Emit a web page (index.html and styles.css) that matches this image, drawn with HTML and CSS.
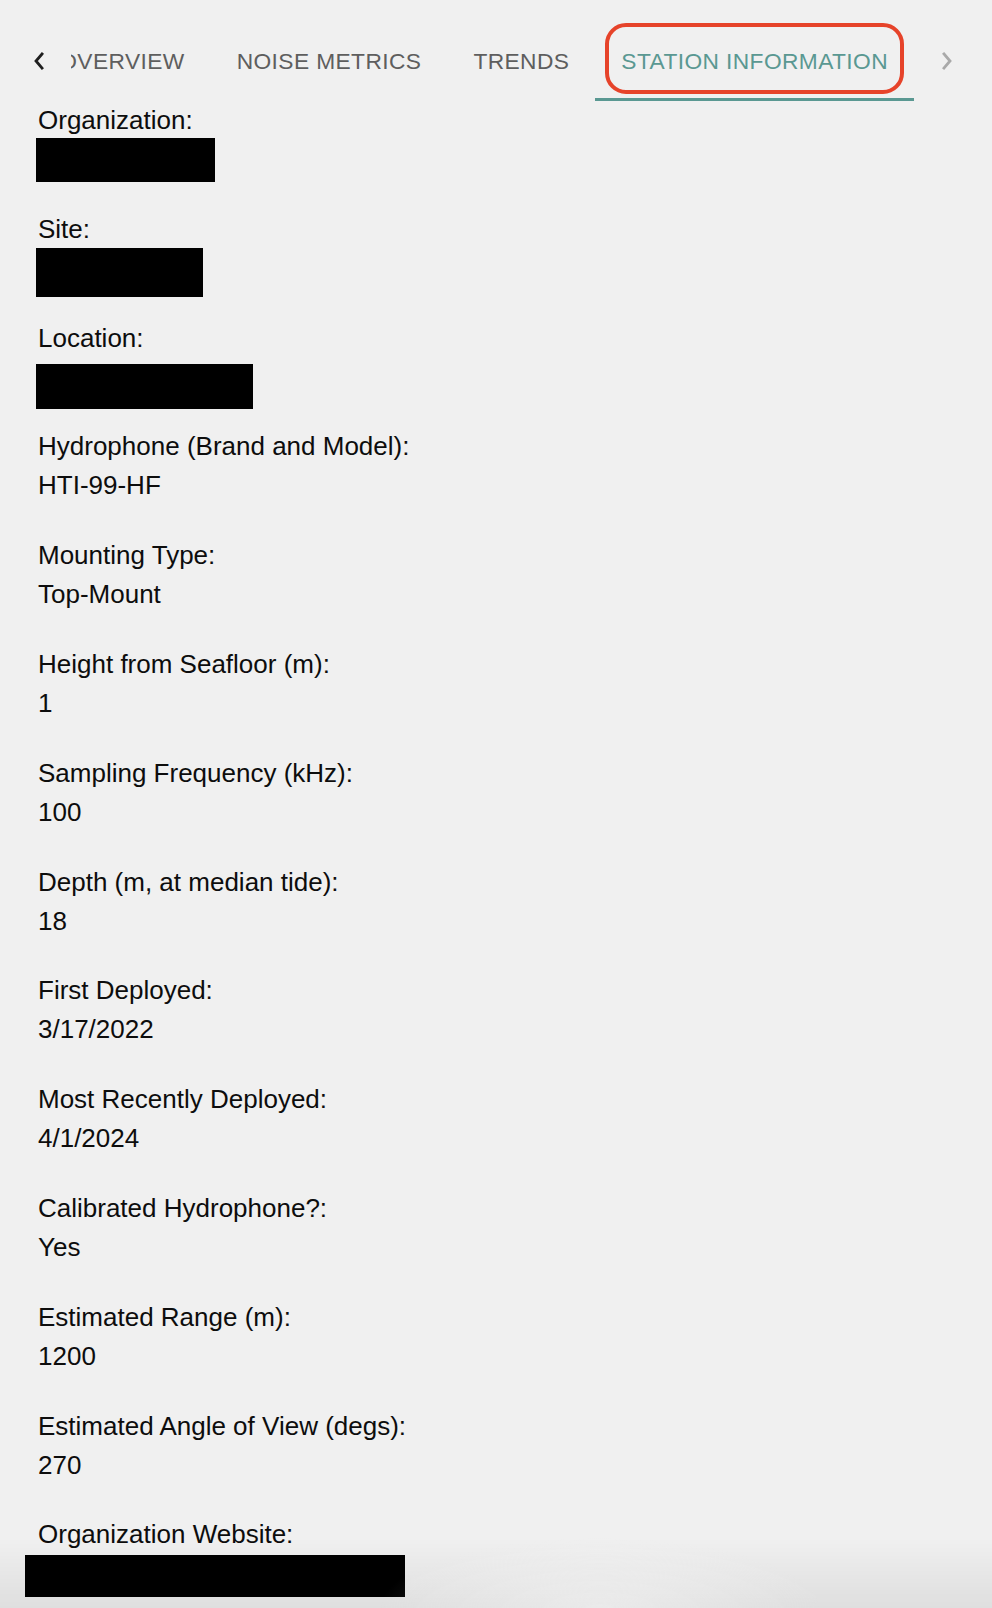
FILE: index.html
```html
<!DOCTYPE html>
<html lang="en">
<head>
<meta charset="utf-8">
<title>Station Information</title>
<link rel="stylesheet" href="styles.css">
</head>
<body>
<div class="tabs">
  <div class="scroll-btn">
    <svg width="12" height="18" viewBox="0 0 12 18"><polyline points="9,2 3,9 9,16" fill="none" stroke="#1f1f1f" stroke-width="2.8" stroke-linecap="square"/></svg>
  </div>
  <div class="scroller">
    <div class="tab">Overview</div>
    <div class="tab">Noise Metrics</div>
    <div class="tab">Trends</div>
    <div class="tab active">Station Information<span class="highlight"></span></div>
  </div>
  <div class="scroll-btn">
    <svg width="12" height="18" viewBox="0 0 12 18"><polyline points="3,2 9,9 3,16" fill="none" stroke="#a9a9a9" stroke-width="2.8" stroke-linecap="square"/></svg>
  </div>
</div>

<div class="info">
  <div class="field">
    <div class="label">Organization:</div>
    <div class="value"><span class="redact r-org"></span></div>
  </div>
  <div class="field">
    <div class="label">Site:</div>
    <div class="value"><span class="redact r-site"></span></div>
  </div>
  <div class="field">
    <div class="label">Location:</div>
    <div class="value"><span class="redact r-loc"></span></div>
  </div>
  <div class="field">
    <div class="label">Hydrophone (Brand and Model):</div>
    <div class="value">HTI-99-HF</div>
  </div>
  <div class="field">
    <div class="label">Mounting Type:</div>
    <div class="value">Top-Mount</div>
  </div>
  <div class="field">
    <div class="label">Height from Seafloor (m):</div>
    <div class="value">1</div>
  </div>
  <div class="field">
    <div class="label">Sampling Frequency (kHz):</div>
    <div class="value">100</div>
  </div>
  <div class="field">
    <div class="label">Depth (m, at median tide):</div>
    <div class="value">18</div>
  </div>
  <div class="field">
    <div class="label">First Deployed:</div>
    <div class="value">3/17/2022</div>
  </div>
  <div class="field">
    <div class="label">Most Recently Deployed:</div>
    <div class="value">4/1/2024</div>
  </div>
  <div class="field">
    <div class="label">Calibrated Hydrophone?:</div>
    <div class="value">Yes</div>
  </div>
  <div class="field">
    <div class="label">Estimated Range (m):</div>
    <div class="value">1200</div>
  </div>
  <div class="field">
    <div class="label">Estimated Angle of View (degs):</div>
    <div class="value">270</div>
  </div>
  <div class="field">
    <div class="label">Organization Website:</div>
    <div class="value"><span class="redact r-web"></span></div>
  </div>
</div>
<div class="vignette"></div>
</body>
</html>
```

FILE: styles.css
```css
html, body {
  margin: 0;
  padding: 0;
  height: 100%;
  overflow: hidden;
}

body {
  background: #f0f0f0;
  font-family: "Liberation Sans", Arial, Helvetica, sans-serif;
  color: #0d0d0d;
}

.tabs {
  display: flex;
  height: 78px;
  margin: 23px 13px 0 6px;
}

.scroll-btn {
  flex: 0 0 65px;
  display: flex;
  align-items: center;
  justify-content: center;
  padding-bottom: 2px;
}

.scroller {
  flex: 1;
  min-width: 0;
  overflow: hidden;
  display: flex;
  justify-content: flex-end;
}

.tab {
  flex: 0 0 auto;
  position: relative;
  min-width: 146px;
  box-sizing: border-box;
  padding: 0 26px 2px;
  display: flex;
  align-items: center;
  justify-content: center;
  font-size: 22.75px;
  letter-spacing: 0.4px;
  text-transform: uppercase;
  color: #5e5e5e;
  white-space: nowrap;
}

.tab.active {
  color: #5a9892;
}

.tab.active::after {
  content: "";
  position: absolute;
  left: 0;
  right: 0;
  bottom: 0;
  height: 3.25px;
  background: #5a9892;
}

.highlight {
  position: absolute;
  top: 0;
  left: 10px;
  right: 10px;
  bottom: 7px;
  border: 4.5px solid #e6432a;
  border-radius: 21px;
}

.info {
  display: flex;
  flex-direction: column;
  gap: 30.8px;
  padding-left: 38px;
}

.label,
.value {
  font-size: 26px;
  line-height: 39px;
  height: 39px;
  white-space: nowrap;
}

.value {
  position: relative;
}

.redact {
  position: absolute;
  background: #000;
}

.r-org {
  top: -2.5px;
  left: -2px;
  width: 179px;
  height: 44px;
}

.r-site {
  top: -1.3px;
  left: -2px;
  width: 167px;
  height: 49px;
}

.r-loc {
  top: 6px;
  left: -2px;
  width: 217px;
  height: 45px;
}

.r-web {
  top: 1px;
  left: -13px;
  width: 380px;
  height: 42px;
}

.vignette {
  position: fixed;
  left: 0;
  right: 0;
  bottom: 0;
  height: 70px;
  pointer-events: none;
  background:
    radial-gradient(ellipse 220px 70px at 600px 100%, rgba(255,255,255,0.35), rgba(255,255,255,0) 100%),
    linear-gradient(to bottom, rgba(0,0,0,0), rgba(0,0,0,0.07));
}
```
